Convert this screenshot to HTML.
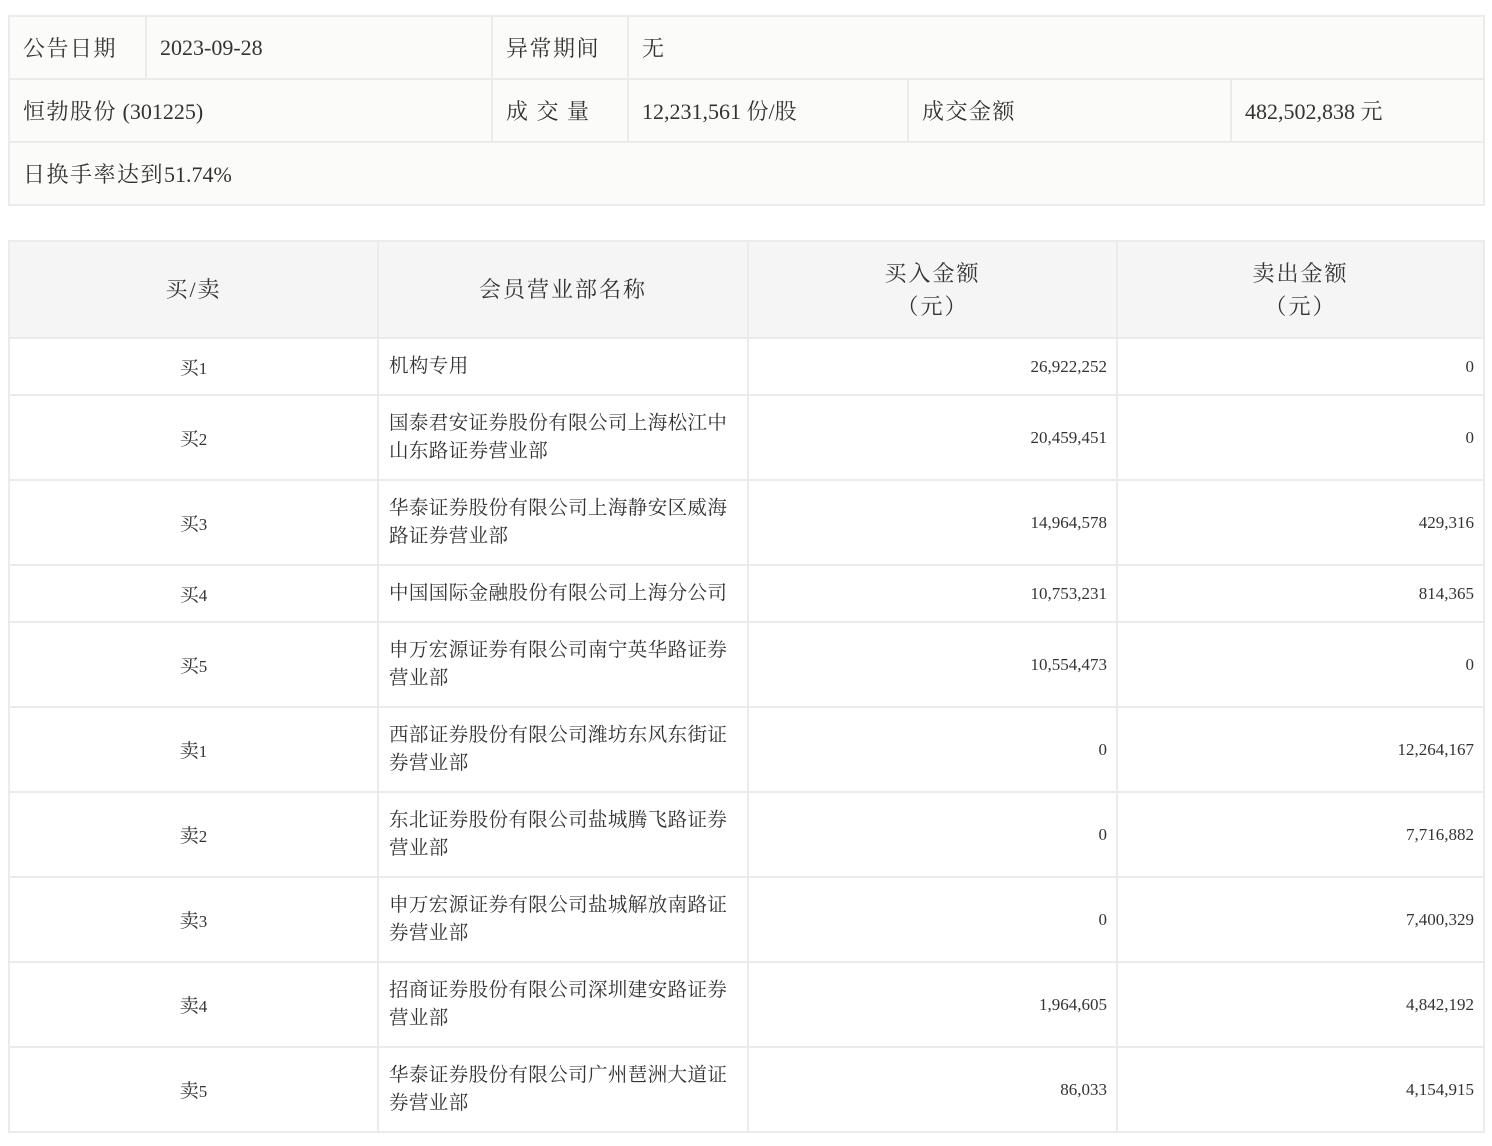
<!DOCTYPE html>
<html><head><meta charset="utf-8"><style>
body{margin:0;background:#fff;font-family:"Liberation Serif","Noto Serif CJK SC",serif;color:#333;}
table{border-collapse:collapse;position:absolute;left:8px;table-layout:fixed;}
td{border:2px solid #ebebeb;padding:0;}
#t1{top:15px;width:1477px;background:#fbfbfa;font-size:22px;}
#t1 td{height:61px;padding-left:13px;}
.k{letter-spacing:1.5px}
#t2{top:240px;width:1477px;font-size:17px;}
#t2 th{background:#f5f5f5;font-weight:normal;font-size:22px;letter-spacing:2px;border:2px solid #ebebeb;height:93px;line-height:33px;}
#t2 td.c{text-align:center}
#t2 td.c span{font-size:19px}
#t2 td.n{text-align:right;padding-right:9px}
#t2 td.m{padding-left:10px;line-height:28px;padding-right:8px;font-size:19.5px;letter-spacing:0.4px}
</style></head><body>
<table id="t1">
<colgroup><col style="width:137px"><col style="width:346px"><col style="width:136px"><col style="width:280px"><col style="width:323px"><col></colgroup>
<tr><td class="k">公告日期</td><td>2023-09-28</td><td class="k">异常期间</td><td colspan="3">无</td></tr>
<tr><td colspan="2"><span class="k">恒勃股份</span> (301225)</td><td class="k">成 交 量</td><td>12,231,561 份/股</td><td class="k">成交金额</td><td>482,502,838 元</td></tr>
<tr><td colspan="6"><span class="k">日换手率达到</span>51.74%</td></tr>
</table>
<table id="t2">
<colgroup><col style="width:369px"><col style="width:370px"><col style="width:369px"><col></colgroup>
<tr><th>买/卖</th><th>会员营业部名称</th><th>买入金额<br>（元）</th><th>卖出金额<br>（元）</th></tr>
<tr style="height:57px"><td class="c"><span>买</span>1</td><td class="m">机构专用</td><td class="n">26,922,252</td><td class="n">0</td></tr>
<tr style="height:85px"><td class="c"><span>买</span>2</td><td class="m">国泰君安证券股份有限公司上海松江中山东路证券营业部</td><td class="n">20,459,451</td><td class="n">0</td></tr>
<tr style="height:85px"><td class="c"><span>买</span>3</td><td class="m">华泰证券股份有限公司上海静安区威海路证券营业部</td><td class="n">14,964,578</td><td class="n">429,316</td></tr>
<tr style="height:57px"><td class="c"><span>买</span>4</td><td class="m">中国国际金融股份有限公司上海分公司</td><td class="n">10,753,231</td><td class="n">814,365</td></tr>
<tr style="height:85px"><td class="c"><span>买</span>5</td><td class="m">申万宏源证券有限公司南宁英华路证券营业部</td><td class="n">10,554,473</td><td class="n">0</td></tr>
<tr style="height:85px"><td class="c"><span>卖</span>1</td><td class="m">西部证券股份有限公司潍坊东风东街证券营业部</td><td class="n">0</td><td class="n">12,264,167</td></tr>
<tr style="height:85px"><td class="c"><span>卖</span>2</td><td class="m">东北证券股份有限公司盐城腾飞路证券营业部</td><td class="n">0</td><td class="n">7,716,882</td></tr>
<tr style="height:85px"><td class="c"><span>卖</span>3</td><td class="m">申万宏源证券有限公司盐城解放南路证券营业部</td><td class="n">0</td><td class="n">7,400,329</td></tr>
<tr style="height:85px"><td class="c"><span>卖</span>4</td><td class="m">招商证券股份有限公司深圳建安路证券营业部</td><td class="n">1,964,605</td><td class="n">4,842,192</td></tr>
<tr style="height:85px"><td class="c"><span>卖</span>5</td><td class="m">华泰证券股份有限公司广州琶洲大道证券营业部</td><td class="n">86,033</td><td class="n">4,154,915</td></tr>
</table>
</body></html>
